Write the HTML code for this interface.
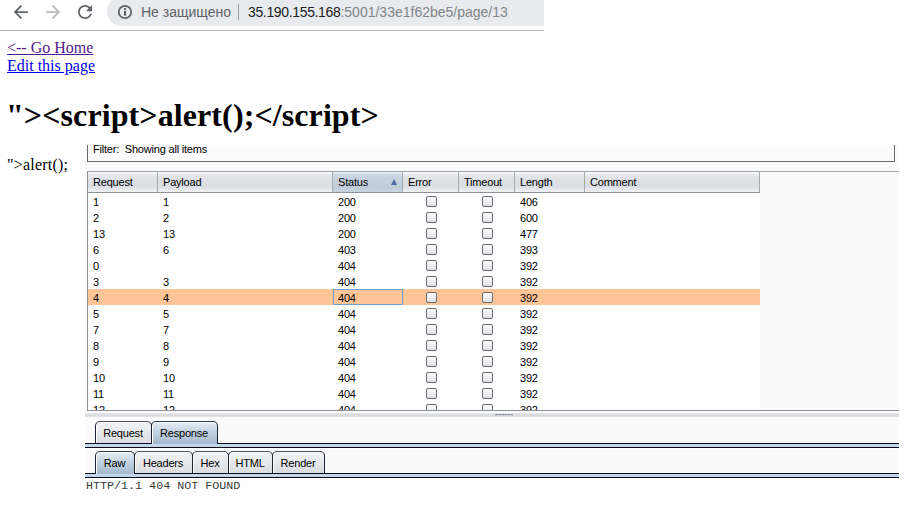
<!DOCTYPE html>
<html><head><meta charset="utf-8">
<style>
html,body{margin:0;padding:0;background:#fff;width:906px;height:526px;overflow:hidden;position:relative}
.abs{position:absolute}
#bar{left:0;top:0;width:544px;height:30px;background:#fff}
#barline{left:0;top:30px;width:544px;height:1px;background:#b4b4b4}
#pill{left:107px;top:-3px;width:437px;height:28.6px;background:#e8eaed;border-radius:15px 0 0 15px}
.chrome{font-family:"Liberation Sans",sans-serif;font-size:14px;white-space:nowrap}
#page{left:7px;top:39px;font-family:"Liberation Serif",serif;font-size:16px;line-height:18px;color:#000}
#page a{display:block;text-decoration:underline}
#h1{left:6px;top:97px;letter-spacing:0.1px;margin:0;font-size:32px;line-height:37px;font-weight:bold;font-family:"Liberation Serif",serif;white-space:nowrap}
#xss{left:7px;letter-spacing:0.2px;top:156px;font-family:"Liberation Serif",serif;font-size:16px;line-height:18px}
#burp{left:85px;top:145px;width:814px;height:381px;background:#fafafa;overflow:hidden;font-family:"Liberation Sans",sans-serif;font-size:11px;color:#000;letter-spacing:-0.2px}
#burp span{white-space:nowrap}
#filt{left:2px;top:-10px;width:806px;height:26px;border:1px solid #6b6b6b;border-top:none;background:#fbfbfb}
#filt span{position:absolute;left:5px;top:8px;line-height:13px}
#tview{left:2px;top:26px;width:811px;height:238px;border-top:1px solid #9ea3ab;border-left:1px solid #8e9299;border-bottom:1px solid #8e9299;background:#fafafa;overflow:hidden}
#rowsbg{left:0;top:0;width:672px;height:238px;background:#fff}
.row{position:absolute;left:0;width:672px;height:16px}
.row span{position:absolute;top:1px;line-height:16px}
.row.sel{background:#ffc596}
.cb{position:absolute;top:3px;width:9px;height:9px;border:1px solid #686b70;border-radius:2px;background:linear-gradient(#fbfbfc,#dfe1e4)}
#selcell{left:245px;top:117px;width:68px;height:14px;border:1px solid #6f9fd6}
#thead{left:0;top:0;width:672px;height:20px;border-bottom:1px solid #8e9299}
.hc{position:absolute;top:0;height:20px;box-sizing:border-box;border-right:1px solid #a6a9ae;background:linear-gradient(#ffffff 0,#ffffff 1px,#eceef1 1px,#e2e4e8 5px,#dcdfe4 10px,#d9dce2 14px,#dfe1e5 16px,#eeeff1 19px);}
.hc span{position:absolute;left:5px;top:4px;line-height:13px}
.hc.st{background:linear-gradient(#eef2f6 0,#eef2f6 1px,#d8e0e8 1px,#c9d4df 5px,#c4d0dc 11px,#c0ccd8 15px,#c6d2de 19px)}
.tri{position:absolute;left:58.2px;top:6.6px;width:0;height:0;border-left:3.6px solid transparent;border-right:3.6px solid transparent;border-bottom:6.4px solid #4e6ba7}
#split{left:0;top:268px;width:814px;height:4px;background:linear-gradient(#e6e7e9 0,#e6e7e9 1px,#dcdee2 1px,#dcdee2 2px,#d9dbdf 2px,#d9dbdf 3px,#e0e1e4 3px)}
.grip{left:410px;top:269px;width:16px;height:1px;border-left:1px solid #a0a3a9;border-right:1px solid #a0a3a9;border-bottom:1px solid #cdd1d8;background:repeating-linear-gradient(90deg,#8c8f95 0,#8c8f95 2px,#b4b7bc 2px,#b4b7bc 3px)}
.tab{box-sizing:border-box;border:1px solid #1a2230;border-top-color:#4a515a;border-bottom:none;border-radius:5px 5px 0 0;background:linear-gradient(#f3f4f6,#dadce0);box-shadow:inset 1px 1px 0 #fff}
.tab span{position:absolute;left:0;right:1px;text-align:center;top:5px;line-height:13px}
.tab.sel{background:linear-gradient(#e8eef5,#c3d2e0 45%,#a4b9ce);z-index:2;border-top-color:#2e3846}
.tline{left:0;width:814px;height:7px;background:linear-gradient(#fff 0,#fff 1px,#0a0a1a 1px,#0a0a1a 2px,#c6dbef 2px,#bfd3e6 5px,#0a0a1a 5px,#0a0a1a 6px,#fff 6px)}
#resp{left:0;top:333px;width:814px;height:48px;background:#fff;font-family:"Liberation Mono",monospace;font-size:11.7px;line-height:14px;padding-left:1px;padding-top:1px;color:#3a3a3a;letter-spacing:0}

</style></head><body>
<div id="bar" class="abs"></div>
<div id="pill" class="abs"></div>
<div id="barline" class="abs"></div>
<svg class="abs" style="left:0;top:0" width="110" height="30">
  <path transform="translate(10.3,1.5) scale(0.875)" d="M20 11H7.83l5.59-5.59L12 4l-8 8 8 8 1.41-1.41L7.83 13H20v-2z" fill="#5f6368"/>
  <path transform="translate(42.6,1.5) scale(0.875)" d="M12 4l-1.41 1.41L16.17 11H4v2h12.17l-5.58 5.59L12 20l8-8z" fill="#b9b9b9"/>
  <path transform="translate(74.6,1.5) scale(0.875)" d="M17.65 6.35A7.958 7.958 0 0 0 12 4c-4.42 0-7.99 3.58-7.99 8s3.57 8 7.99 8c3.73 0 6.84-2.55 7.73-6h-2.08A5.99 5.99 0 0 1 12 18c-3.31 0-6-2.69-6-6s2.69-6 6-6c1.66 0 3.14.69 4.22 1.780L13 11h7V4l-2.35 2.35z" fill="#5f6368"/>
</svg>
<svg class="abs" style="left:115px;top:2px" width="22" height="22">
  <circle cx="10" cy="10" r="6.2" stroke="#5f6368" stroke-width="1.75" fill="none"/>
  <rect x="8.95" y="8.8" width="2.1" height="4.8" fill="#5f6368"/>
  <rect x="9" y="6" width="2" height="1.8" fill="#5f6368"/>
</svg>
<div class="abs chrome" style="left:141px;top:4px;color:#5f6368">Не защищено</div>
<div class="abs" style="left:238px;top:4px;width:1px;height:16px;background:#9aa0a6"></div>
<div class="abs chrome" style="left:248px;top:4px;color:#202124"><span style="letter-spacing:-0.35px">35.190.155.168</span><span style="color:#80868b">:5001/33e1f62be5/page/13</span></div>

<div id="page" class="abs">
  <a style="color:#551a8b">&lt;-- Go Home</a>
  <a style="color:#0000ee">Edit this page</a>
</div>
<h1 class="abs" id="h1">"&gt;&lt;script&gt;alert();&lt;/script&gt;</h1>
<div class="abs" id="xss">"&gt;alert();</div>

<div id="burp" class="abs">
<div class="abs" id="filt"><span>Filter:&nbsp; Showing all items</span></div>
<div class="abs" id="tview">
<div class="abs" id="rowsbg"></div>
<div class="row" style="top:21px"><span style="left:5px">1</span><span style="left:75px">1</span><span style="left:250px">200</span><i class="cb" style="left:338px"></i><i class="cb" style="left:394px"></i><span style="left:432px">406</span></div>
<div class="row" style="top:37px"><span style="left:5px">2</span><span style="left:75px">2</span><span style="left:250px">200</span><i class="cb" style="left:338px"></i><i class="cb" style="left:394px"></i><span style="left:432px">600</span></div>
<div class="row" style="top:53px"><span style="left:5px">13</span><span style="left:75px">13</span><span style="left:250px">200</span><i class="cb" style="left:338px"></i><i class="cb" style="left:394px"></i><span style="left:432px">477</span></div>
<div class="row" style="top:69px"><span style="left:5px">6</span><span style="left:75px">6</span><span style="left:250px">403</span><i class="cb" style="left:338px"></i><i class="cb" style="left:394px"></i><span style="left:432px">393</span></div>
<div class="row" style="top:85px"><span style="left:5px">0</span><span style="left:75px"></span><span style="left:250px">404</span><i class="cb" style="left:338px"></i><i class="cb" style="left:394px"></i><span style="left:432px">392</span></div>
<div class="row" style="top:101px"><span style="left:5px">3</span><span style="left:75px">3</span><span style="left:250px">404</span><i class="cb" style="left:338px"></i><i class="cb" style="left:394px"></i><span style="left:432px">392</span></div>
<div class="row sel" style="top:117px"><span style="left:5px">4</span><span style="left:75px">4</span><span style="left:250px">404</span><i class="cb" style="left:338px"></i><i class="cb" style="left:394px"></i><span style="left:432px">392</span></div>
<div class="row" style="top:133px"><span style="left:5px">5</span><span style="left:75px">5</span><span style="left:250px">404</span><i class="cb" style="left:338px"></i><i class="cb" style="left:394px"></i><span style="left:432px">392</span></div>
<div class="row" style="top:149px"><span style="left:5px">7</span><span style="left:75px">7</span><span style="left:250px">404</span><i class="cb" style="left:338px"></i><i class="cb" style="left:394px"></i><span style="left:432px">392</span></div>
<div class="row" style="top:165px"><span style="left:5px">8</span><span style="left:75px">8</span><span style="left:250px">404</span><i class="cb" style="left:338px"></i><i class="cb" style="left:394px"></i><span style="left:432px">392</span></div>
<div class="row" style="top:181px"><span style="left:5px">9</span><span style="left:75px">9</span><span style="left:250px">404</span><i class="cb" style="left:338px"></i><i class="cb" style="left:394px"></i><span style="left:432px">392</span></div>
<div class="row" style="top:197px"><span style="left:5px">10</span><span style="left:75px">10</span><span style="left:250px">404</span><i class="cb" style="left:338px"></i><i class="cb" style="left:394px"></i><span style="left:432px">392</span></div>
<div class="row" style="top:213px"><span style="left:5px">11</span><span style="left:75px">11</span><span style="left:250px">404</span><i class="cb" style="left:338px"></i><i class="cb" style="left:394px"></i><span style="left:432px">392</span></div>
<div class="row" style="top:229px"><span style="left:5px">12</span><span style="left:75px">12</span><span style="left:250px">404</span><i class="cb" style="left:338px"></i><i class="cb" style="left:394px"></i><span style="left:432px">392</span></div>
<div class="abs" id="selcell"></div>
<div class="abs" id="thead">
<div class="hc" style="left:0px;width:70px"><span>Request</span></div>
<div class="hc" style="left:70px;width:175px"><span>Payload</span></div>
<div class="hc st" style="left:245px;width:70px"><span>Status</span><b class="tri"></b></div>
<div class="hc" style="left:315px;width:56px"><span>Error</span></div>
<div class="hc" style="left:371px;width:56px"><span>Timeout</span></div>
<div class="hc" style="left:427px;width:70px"><span>Length</span></div>
<div class="hc" style="left:497px;width:175px"><span>Comment</span></div>
</div>
</div>
<div class="abs" id="split"></div>
<div class="abs grip"></div>
<div class="abs tline" style="top:297px"></div>
<div class="abs tline" style="top:327px"></div>
<div class="abs tab" style="left:10px;top:276px;width:57px;height:22px"><span>Request</span></div>
<div class="abs tab sel" style="left:66px;top:276px;width:67px;height:23px"><span>Response</span></div>
<div class="abs tab sel" style="left:10px;top:306px;width:40px;height:23px"><span>Raw</span></div>
<div class="abs tab" style="left:49px;top:306px;width:59px;height:22px"><span>Headers</span></div>
<div class="abs tab" style="left:107px;top:306px;width:37px;height:22px"><span>Hex</span></div>
<div class="abs tab" style="left:143px;top:306px;width:45px;height:22px"><span>HTML</span></div>
<div class="abs tab" style="left:187px;top:306px;width:53px;height:22px"><span>Render</span></div>
<div class="abs" id="resp">HTTP/1.1 404 NOT FOUND</div>
</div>
</body></html>
